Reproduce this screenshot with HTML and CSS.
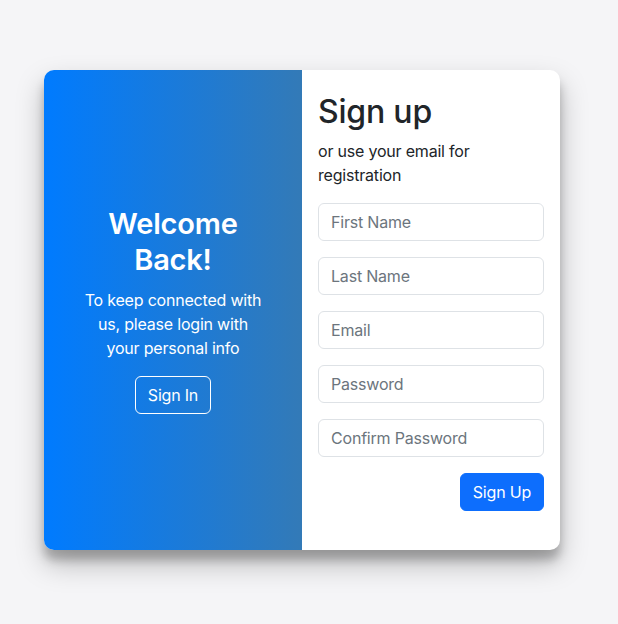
FILE: index.html
```html
<!DOCTYPE html>
<html lang="en">
<head>
<meta charset="utf-8">
<title>Sign up</title>
<link rel="stylesheet" href="styles.css">
</head>
<body>
<div class="page">
  <div class="card">
    <div class="overlay">
      <h1 class="welcome">Welcome Back!</h1>
      <p class="lead">To keep connected with us, please login with your personal info</p>
      <button class="btn btn-outline" type="button">Sign In</button>
    </div>
    <form class="form">
      <h2 class="title">Sign up</h2>
      <p class="sub">or use your email for registration</p>
      <input class="field" type="text" placeholder="First Name">
      <input class="field" type="text" placeholder="Last Name">
      <input class="field" type="email" placeholder="Email">
      <input class="field" type="password" placeholder="Password">
      <input class="field" type="password" placeholder="Confirm Password">
      <div class="actions">
        <button class="btn btn-primary" type="button">Sign Up</button>
      </div>
    </form>
  </div>
</div>
</body>
</html>
```

FILE: styles.css
```css
* { box-sizing: border-box; }
html, body { margin: 0; height: 100%; }
body {
  background: #f5f5f7;
  font-family: Inter, "Noto Sans", "Liberation Sans", sans-serif;
  color: #212529;
  font-size: 16px;
  line-height: 1.5;
  letter-spacing: -0.2px;
}
.page {
  padding: 70px 0 0 44px;
}
.card {
  display: flex;
  width: 516px;
  height: 480px;
  border-radius: 10px;
  overflow: hidden;
  background: #fff;
  box-shadow: 0 14px 28px rgba(0,0,0,0.25), 0 10px 10px rgba(0,0,0,0.22);
}
.overlay {
  width: 258px;
  flex: none;
  background: linear-gradient(to right, #007bff, #337ab7);
  color: #fff;
  display: flex;
  flex-direction: column;
  align-items: center;
  justify-content: center;
  text-align: center;
  padding: 0 38px;
}
.welcome {
  margin: 0 0 10px;
  font-size: 29px;
  font-weight: 600;
  line-height: 36px;
  padding: 0 4px;
}
.lead {
  margin: 0 0 16px;
  font-size: 16px;
  line-height: 24px;
}
.btn {
  font-family: inherit;
  font-size: 16px;
  line-height: 24px;
  padding: 6px 12px;
  border-radius: 6px;
  letter-spacing: -0.2px;
  cursor: pointer;
}
.btn-outline {
  background: transparent;
  color: #fff;
  border: 1px solid #fff;
}
.btn-primary {
  background: #0d6efd;
  color: #fff;
  border: 1px solid #0d6efd;
}
.form {
  flex: 1;
  display: flex;
  flex-direction: column;
  padding: 23px 16px 16px;
  margin: 0;
}
.title {
  margin: 0 0 8px;
  font-size: 32px;
  font-weight: 500;
  line-height: 38px;
}
.sub {
  margin: 0 0 16px;
  line-height: 24px;
}
.field {
  display: block;
  width: 100%;
  height: 38px;
  margin: 0 0 16px;
  padding: 6px 12px;
  font-family: inherit;
  font-size: 16px;
  line-height: 24px;
  letter-spacing: -0.2px;
  color: #212529;
  background: #fff;
  border: 1px solid #dee2e6;
  border-radius: 6px;
}
.field::placeholder { color: #6c757d; opacity: 1; }
.actions {
  display: flex;
  justify-content: flex-end;
}
```
